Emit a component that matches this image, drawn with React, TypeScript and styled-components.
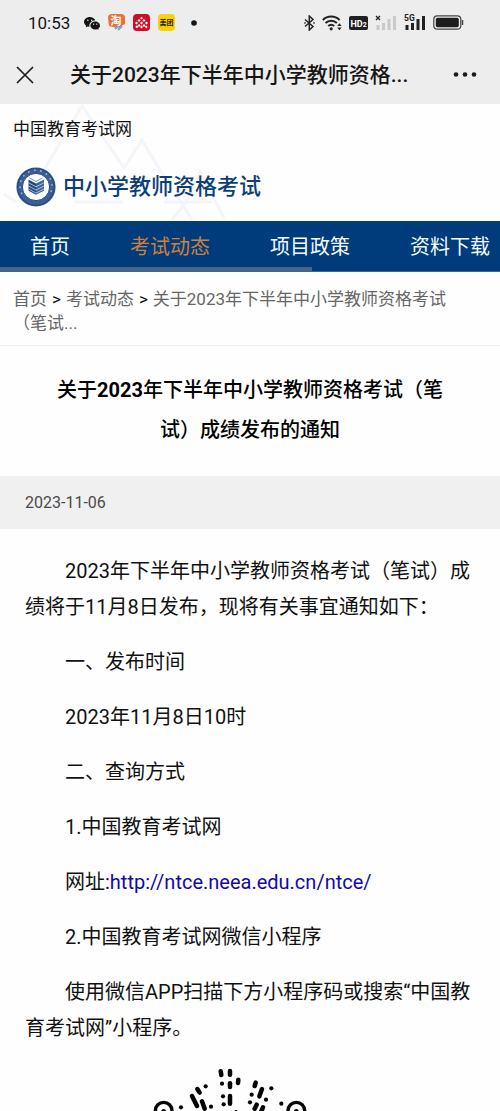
import React from "react";
import styled, { createGlobalStyle } from "styled-components";
import { BsWechat } from "react-icons/bs";

const GlobalStyle = createGlobalStyle`
  *, *::before, *::after { box-sizing: border-box; }
  body {
    margin: 0;
    background: #fefefe;
    color: #111;
    font-family: Roboto, "Noto Sans CJK SC", sans-serif;
  }
  a { color: inherit; text-decoration: none; }
`;

const Page = styled.div`
  overflow: hidden;
`;

const StatusBar = styled.div`
  display: flex;
  align-items: center;
  justify-content: space-between;
  height: 45px;
  padding: 0 36px 0 28px;
  background: #ededed;
`;

const StatusGroup = styled.div<{ $gap: number }>`
  display: flex;
  align-items: center;
  gap: ${(p) => p.$gap}px;
`;

const Clock = styled.span`
  margin-right: 6px;
  font-size: 17px;
  line-height: 24px;
  color: #151515;
`;

const TitleBar = styled.header`
  display: flex;
  align-items: center;
  height: 59px;
  padding: 0 22px 0 14px;
  background: #ededed;
`;

const BarButton = styled.button`
  display: flex;
  padding: 0;
  border: 0;
  background: none;
  color: #1c1c1c;
`;

const BarTitle = styled.div`
  flex: 1;
  padding-left: 34px;
  font-size: 21px;
  font-weight: 500;
  line-height: 32px;
  color: #161616;
`;

const SiteHeader = styled.div`
  position: relative;
  padding: 13px 13px 14px;
`;

const Mountains = styled.svg`
  position: absolute;
  top: 0;
  left: 0;
`;

const SiteName = styled.div`
  position: relative;
  font-size: 17px;
  line-height: 24px;
`;

const Brand = styled.a`
  position: relative;
  display: flex;
  align-items: center;
  gap: 7px;
  margin-top: 26px;
  padding-left: 3px;
  font-size: 22px;
  font-weight: 500;
  line-height: 40px;
  color: #0d3f77;
`;

const Nav = styled.nav`
  position: relative;
  display: flex;
  height: 51px;
  overflow: hidden;
  background: #003c7b;
  border-bottom: 1px solid #3d6797;
`;

const NavLink = styled.a<{ $active?: boolean }>`
  flex: none;
  padding: 0 30px;
  font-size: 20px;
  line-height: 52px;
  color: ${(p) => (p.$active ? "#d07f3d" : "#f2fbff")};
`;

const ScrollThumb = styled.span`
  position: absolute;
  left: 0;
  bottom: 0;
  width: 62.4%;
  height: 4px;
  background: #486384;
`;

const Breadcrumb = styled.nav`
  padding: 15px 13px 10px;
  border-bottom: 1px solid #f0f0f0;
  font-size: 17px;
  line-height: 24px;
  a { color: #666; }
`;

const Separator = styled.span`
  margin: 0 5px;
`;

const ArticleTitle = styled.h1`
  margin: 0;
  padding: 24px 50px 26px;
  font-size: 20px;
  font-weight: 500;
  line-height: 40px;
  text-align: center;
  color: #000;
`;

const DateBar = styled.div`
  padding: 15px 25px 14px;
  background: #f0f0f0;
  font-size: 16px;
  line-height: 24px;
  color: #4a4a4a;
`;

const Article = styled.article`
  padding: 24px 25px 0;
  font-size: 20px;
  line-height: 36px;
`;

const Paragraph = styled.p`
  margin: 0 0 19px;
  text-indent: 40px;
`;

const SiteLink = styled.a`
  && { color: #1208a8; }
`;

const CodeRow = styled.div`
  display: flex;
  justify-content: center;
  padding: 2px 40px 0 0;
`;

const TaobaoIcon = () => (
  <svg width="17" height="17" viewBox="0 0 17 17">
    <rect width="17" height="17" rx="4" fill="#f5ece5" />
    <path d="M4 0h9a4 4 0 0 1 4 4v6L9 14 1 12 0 4a4 4 0 0 1 4-4Z" fill="#ea7038" />
    <text x="8" y="11" fontSize="11" fontWeight="700" fill="#fff" textAnchor="middle">淘</text>
    <path d="m7 15 3-3m0 4 4-4" stroke="#6ba6d8" strokeWidth="2" />
    <path d="m11 13 3-3" stroke="#e95888" strokeWidth="1" />
  </svg>
);

const RedIcon = () => (
  <svg width="17" height="17" viewBox="0 0 17 17">
    <rect width="17" height="17" rx="4" fill="#cf0d24" />
    <g fill="#fff">
      {[[8.5, 4.2], [6, 6.5], [11, 6.5], [3.5, 9], [8.5, 9], [13.5, 9], [6, 11.5], [11, 11.5], [3.8, 12.8], [8.5, 13], [13.2, 12.8]].map(([x, y]) => (
        <path key={`${x}-${y}`} d={`M${x} ${y - 1.4}l1.5 1.4-1.5 1.4-1.5-1.4Z`} />
      ))}
    </g>
  </svg>
);

const MeituanIcon = () => (
  <svg width="17" height="17" viewBox="0 0 17 17">
    <rect width="17" height="17" rx="4" fill="#fbd00c" />
    <text x="8.5" y="11.2" fontSize="7" fontWeight="700" fill="#2a2200" textAnchor="middle">美团</text>
  </svg>
);

const DotIcon = () => (
  <svg width="22" height="6" viewBox="0 0 22 6">
    <circle cx="11" cy="3" r="2.8" fill="#151515" />
  </svg>
);

const BluetoothIcon = () => (
  <svg width="11" height="16" viewBox="0 0 11 16" fill="none" stroke="#222" strokeWidth="1.5">
    <path d="m1 4.500 8 7L5.300 15V1L9 4.500l-8 7" />
    <path d="M.3 8h1.400M9.300 8h1.400" strokeWidth="1.6" />
  </svg>
);

const WifiIcon = () => (
  <svg width="20" height="17" viewBox="0 0 20 17" fill="none" stroke="#222">
    <path d="M.8 6a12 12 0 0 1 16.800 0M3.500 9a8.200 8.200 0 0 1 11.400 0M6.200 12a4.600 4.600 0 0 1 6 0" strokeWidth="2" />
    <circle cx="9.2" cy="14.8" r="1.6" fill="#222" stroke="none" />
    <path d="m15.200 12 2.200-2.700 2.200 2.700ZM15.200 13.500l2.200 2.700 2.200-2.700Z" fill="#222" stroke="none" />
  </svg>
);

const HdIcon = () => (
  <svg width="19" height="14" viewBox="0 0 19 14">
    <rect width="19" height="14" rx="2" fill="#202020" />
    <text x="1.4" y="10.6" fontSize="9" fontWeight="700" fill="#fff">HD</text>
    <text x="13.8" y="10.6" fontSize="7" fontWeight="700" fill="#fff">2</text>
  </svg>
);

const SignalIcon = ({ color, children }: { color: string; children: React.ReactNode }) => (
  <svg width="22" height="17" viewBox="0 0 22 17" overflow="visible">
    <g fill={color}>
      <rect x="1.5" y="11" width="3" height="5" />
      <rect x="7" y="9" width="3" height="7" />
      <rect x="12.5" y="5" width="3" height="11" />
      <rect x="18" y="2" width="3" height="14" />
    </g>
    {children}
  </svg>
);

const BatteryIcon = () => (
  <svg width="31" height="15" viewBox="0 0 31 15">
    <rect x=".8" y=".8" width="27" height="13.4" rx="3.5" fill="none" stroke="#444" strokeWidth="1.2" />
    <rect x="2.8" y="2.8" width="23" height="9.4" rx="1.8" fill="#1d1d1d" />
    <path d="M29.500 5v5" stroke="#444" strokeWidth="1.5" />
  </svg>
);

const LogoIcon = () => (
  <svg width="40" height="40" viewBox="0 0 40 40">
    <circle cx="20" cy="20" r="19.6" fill="#3c5e97" />
    <circle cx="20" cy="20" r="18.3" fill="none" stroke="#274a86" strokeWidth="1.2" />
    <path d="M6 27A16 16 0 1 1 34 27" fill="none" stroke="#a9bad6" strokeWidth="1.5" strokeDasharray="1.6 4.6" />
    <circle cx="20" cy="20" r="13.6" fill="#fdfdfe" stroke="#274a86" />
    <path d="m12.500 12.500 7.500 4v11.300l-7.500-4Z" fill="#234983" />
    <path d="m20 16.500 8-4v11.300l-8 4Z" fill="#416397" />
    <path d="m12.500 15.800 7.500 4 8-4M12.500 19l7.500 4 8-4M12.500 22l7.500 4 8-4" fill="none" stroke="#dce5f2" strokeWidth=".7" />
    <path d="m13.500 11 6.500 3.400 6.500-3.400" fill="none" stroke="#7d94ba" strokeWidth="1" />
  </svg>
);

const strokes = [
  [272, 64, 274, 75], [300, 63, 300, 74], [325, 89, 324, 99], [300, 100, 300, 111],
  [300, 138, 300, 161], [202, 117, 209, 128], [186, 138, 201, 168], [216, 154, 224, 176],
  [377, 98, 374, 108], [396, 117, 388, 139], [380, 164, 374, 176], [399, 172, 394, 183],
];
const dots = [
  [276, 101], [279, 139], [281, 163], [227, 109], [243, 170], [153, 172],
  [365, 134], [360, 157], [408, 149], [424, 115], [454, 161],
];

const MiniProgramCode = () => (
  <svg width="160" height="44" viewBox="60 51 480 132" role="img" aria-label="小程序码">
    <g stroke="#050505" strokeWidth="13.5" strokeLinecap="round">
      {strokes.map(([x1, y1, x2, y2]) => (
        <line key={`${x1}-${y1}`} x1={x1} y1={y1} x2={x2} y2={y2} />
      ))}
    </g>
    {dots.map(([x, y]) => <circle key={`${x}-${y}`} cx={x} cy={y} r="6.3" fill="#050505" />)}
    {[101, 499].map((x) => (
      <g key={x}>
        <circle cx={x} cy="182" r="25" fill="none" stroke="#050505" strokeWidth="10" />
        <circle cx={x} cy="184" r="7" fill="#050505" />
      </g>
    ))}
    <circle cx="318" cy="185" r="5" fill="#050505" />
  </svg>
);

export default function App() {
  return (
    <Page>
      <GlobalStyle />
      <StatusBar>
        <StatusGroup $gap={8}>
          <Clock>10:53</Clock>
          <BsWechat size={16} color="#151515" />
          <TaobaoIcon />
          <RedIcon />
          <MeituanIcon />
          <DotIcon />
        </StatusGroup>
        <StatusGroup $gap={7}>
          <BluetoothIcon />
          <WifiIcon />
          <HdIcon />
          <SignalIcon color="#cacaca">
            <path d="m1 2 4 4m0-4-4 4" stroke="#222" strokeWidth="1.3" />
          </SignalIcon>
          <SignalIcon color="#222">
            <rect width="11" height="8.5" fill="#ededed" />
            <text x="0" y="7.3" fontSize="8.5" fontWeight="700" fill="#222">5G</text>
          </SignalIcon>
          <BatteryIcon />
        </StatusGroup>
      </StatusBar>

      <TitleBar>
        <BarButton aria-label="关闭">
          <svg width="22" height="22" viewBox="0 0 22 22" fill="none" stroke="currentColor" strokeWidth="1.7">
            <path d="m3 3 16 16M19 3 3 19" />
          </svg>
        </BarButton>
        <BarTitle>关于2023年下半年中小学教师资格...</BarTitle>
        <BarButton aria-label="更多">
          <svg width="26" height="22" viewBox="0 0 26 22" fill="currentColor">
            <circle cx="4" cy="10.5" r="2.3" />
            <circle cx="13" cy="10.5" r="2.3" />
            <circle cx="22" cy="10.5" r="2.3" />
          </svg>
        </BarButton>
      </TitleBar>

      <SiteHeader>
        <Mountains width="280" height="117" viewBox="0 0 280 117" fill="none" stroke="#f4f5fa" strokeWidth="3">
          <path d="m44 66 38-64 42 62M124 64l18-28 30 50M4 90l12 8M75 98h48M164 98h48M186 98l14-30 24 46M186 98l-14 18M176 90l16 26" />
        </Mountains>
        <SiteName>中国教育考试网</SiteName>
        <Brand href="#">
          <LogoIcon />
          中小学教师资格考试
        </Brand>
      </SiteHeader>

      <Nav>
        <NavLink href="#">首页</NavLink>
        <NavLink href="#" $active>考试动态</NavLink>
        <NavLink href="#">项目政策</NavLink>
        <NavLink href="#">资料下载</NavLink>
        <ScrollThumb />
      </Nav>

      <Breadcrumb>
        <a href="#">首页</a>
        <Separator>&gt;</Separator>
        <a href="#">考试动态</a>
        <Separator>&gt;</Separator>
        <a href="#">关于2023年下半年中小学教师资格考试<br />（笔试...</a>
      </Breadcrumb>

      <ArticleTitle>关于<b>2023</b>年下半年中小学教师资格考试（笔试）成绩发布的通知</ArticleTitle>
      <DateBar><time dateTime="2023-11-06">2023-11-06</time></DateBar>

      <Article>
        <Paragraph>2023年下半年中小学教师资格考试（笔试）成绩将于11月8日发布，现将有关事宜通知如下：</Paragraph>
        <Paragraph>一、发布时间</Paragraph>
        <Paragraph>2023年11月8日10时</Paragraph>
        <Paragraph>二、查询方式</Paragraph>
        <Paragraph>1.中国教育考试网</Paragraph>
        <Paragraph>网址:<SiteLink href="http://ntce.neea.edu.cn/ntce/">http://ntce.neea.edu.cn/ntce/</SiteLink></Paragraph>
        <Paragraph>2.中国教育考试网微信小程序</Paragraph>
        <Paragraph>使用微信APP扫描下方小程序码或搜索“中国教育考试网”小程序。</Paragraph>
        <CodeRow><MiniProgramCode /></CodeRow>
      </Article>
    </Page>
  );
}
